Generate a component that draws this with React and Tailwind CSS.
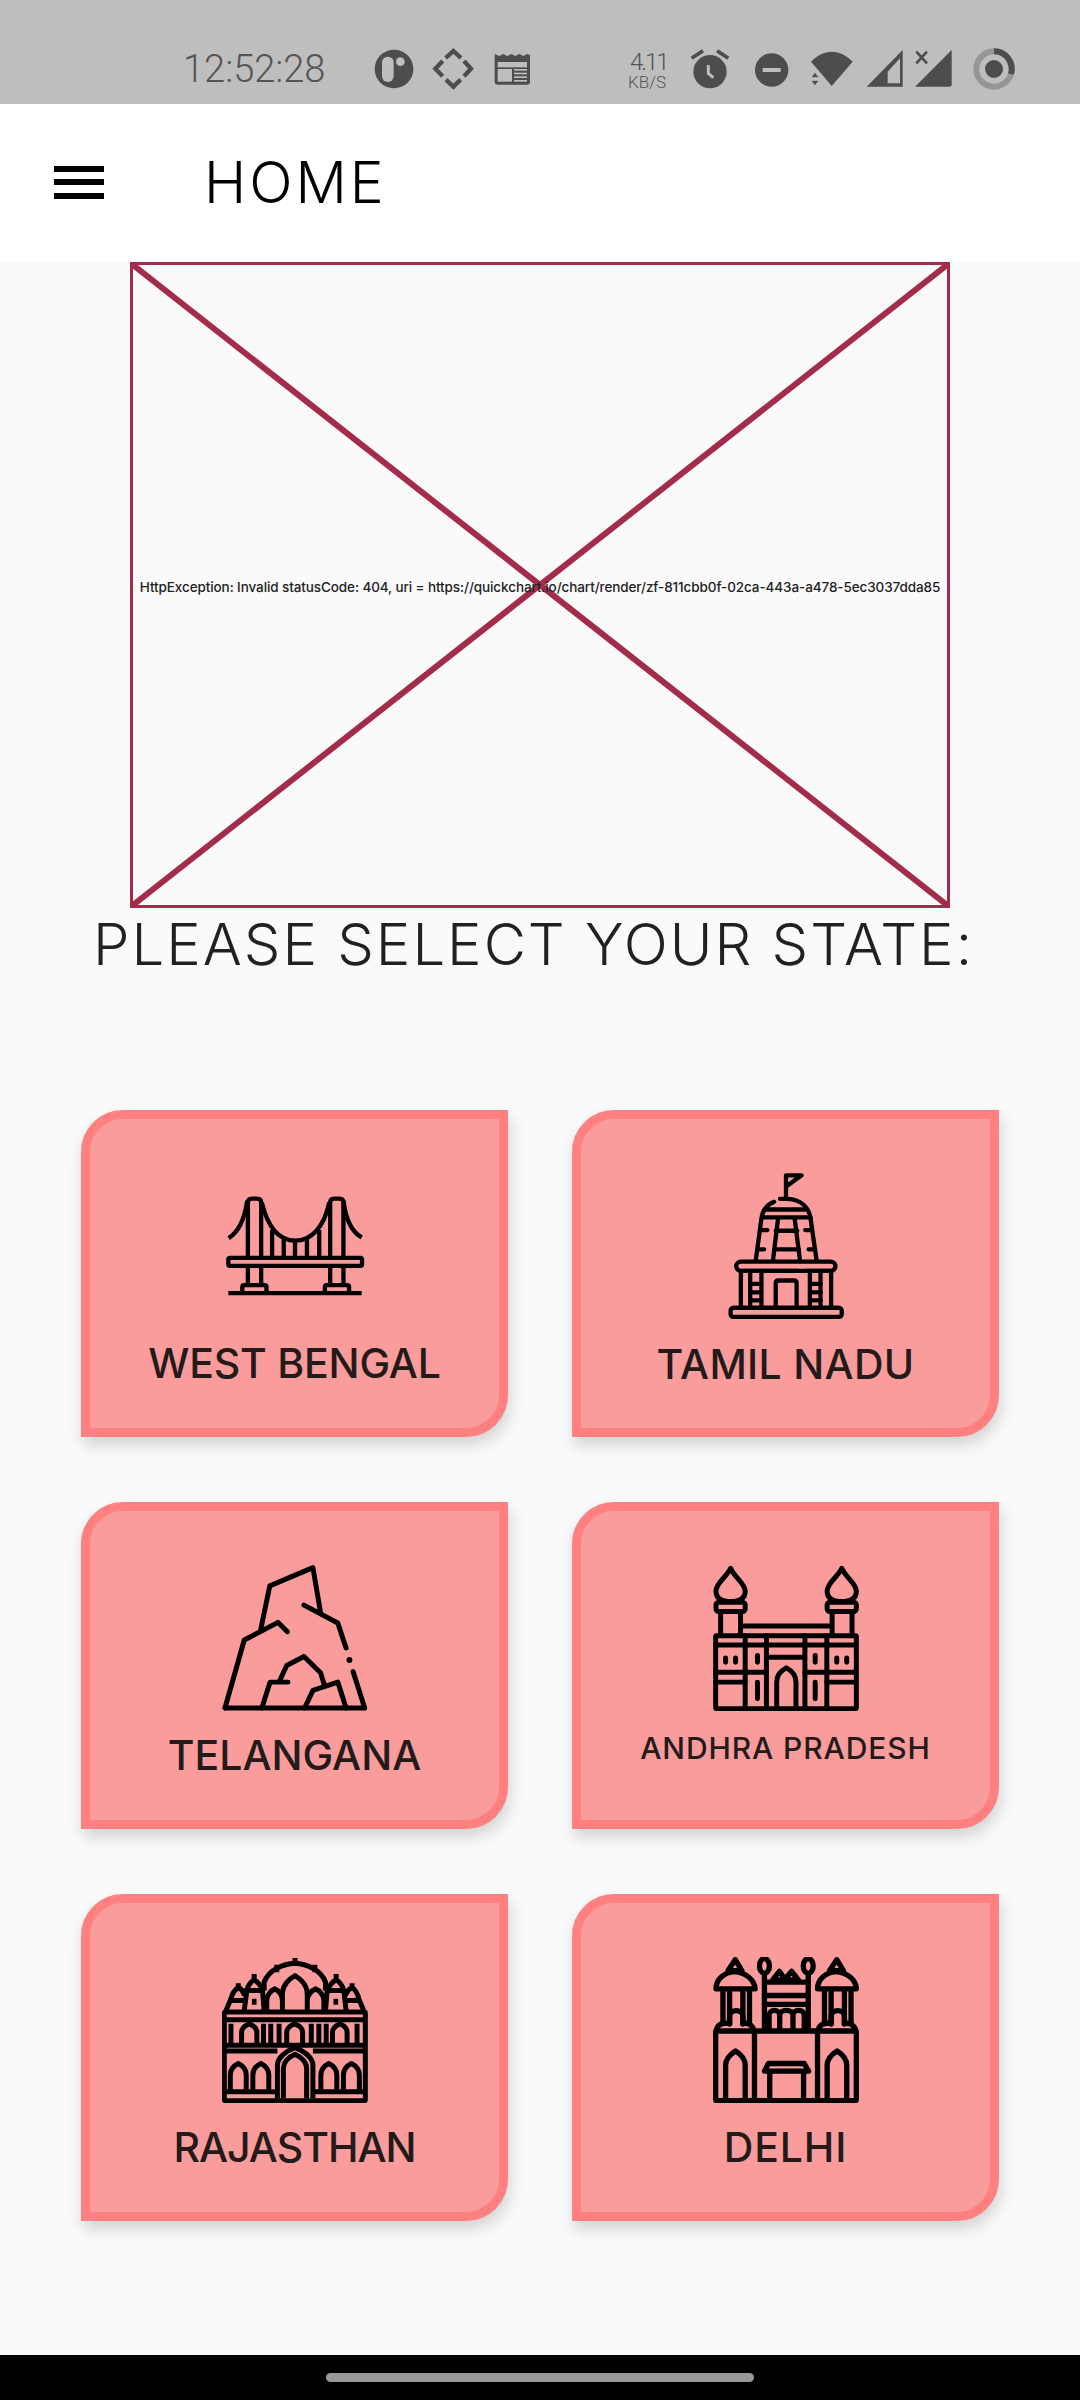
import React from "react";

const FONT = "font-['Inter','Liberation_Sans',sans-serif]";

// Status bar icons, drawn in 3x crop coordinates
const StatusIconsLeft = () => (
  <svg width="180" height="60" viewBox="0 0 540 180" fill="#4d4d4d" className="shrink-0">
    <circle cx="102" cy="87" r="58" />
    <rect x="66" y="50" width="35" height="76" rx="17" fill="#bebebe" />
    <circle cx="121" cy="65" r="13" fill="#bebebe" />
    <g fill="none" stroke="#4d4d4d" strokeWidth="13">
      <path d="M257 54 L280 33 L303 54" />
      <path d="M248 63 L226 86 L248 109" />
      <path d="M312 63 L333 86 L312 109" />
      <path d="M258 119 L280 140 L302 119" />
    </g>
    <path d="M404 42 L418 48 L430 42 L442 48 L454 42 L466 48 L478 42 L490 48 L502 42 L510 46 V125 Q510 134 500 134 H414 Q404 134 404 125 Z" />
    <rect x="413" y="66" width="88" height="16" fill="#bebebe" />
    <rect x="413" y="87" width="43" height="38" fill="#bebebe" />
    <g fill="#bebebe">
      <rect x="462" y="87" width="39" height="5" />
      <rect x="462" y="98" width="39" height="5" />
      <rect x="462" y="109" width="39" height="5" />
      <rect x="462" y="120" width="39" height="5" />
    </g>
  </svg>
);

const StatusIconsRight = () => (
  <svg width="345" height="60" viewBox="0 0 1035 180" fill="#4d4d4d" className="shrink-0">
    {/* alarm */}
    <circle cx="75" cy="95" r="50" />
    <path d="M20 55 L54 32 M130 55 L96 32" stroke="#4d4d4d" strokeWidth="11" fill="none" />
    <path d="M70 75 V100 L85 113" stroke="#bebebe" strokeWidth="9" fill="none" />
    {/* do not disturb */}
    <circle cx="260" cy="90" r="50" />
    <rect x="233" y="84" width="54" height="12" fill="#bebebe" />
    {/* wifi */}
    <path d="M378 65 C415 25 465 25 503 65 L440 138 L418 112 Z" />
    <path d="M390 98 L400 112 H380 Z M380 122 H400 L390 136 Z" />
    <rect x="375" y="113" width="30" height="8" fill="#bebebe" />
    {/* signal 1 */}
    <path fillRule="evenodd" d="M545 140 L653 30 V140 Z M608 130 H645 V55 L608 95 Z" />
    {/* sim x */}
    <path d="M694 35 L726 70 M726 35 L694 70" stroke="#4d4d4d" strokeWidth="8" fill="none" />
    {/* signal 2 */}
    <path d="M690 140 L800 30 V134 Q800 140 794 140 Z" />
    {/* ring */}
    <circle cx="927" cy="87" r="53" fill="none" stroke="#969696" strokeWidth="18" />
    <path d="M927 34 A53 53 0 0 1 978 102" fill="none" stroke="#4d4d4d" strokeWidth="18" />
    <circle cx="927" cy="87" r="27" />
  </svg>
);

const Bridge = () => (
  <svg width="146" height="146" viewBox="482 247 440 438" fill="none" stroke="#000" strokeWidth="13">
    <path d="M560 500 V335 Q560 323 572 323 H588 Q600 323 600 335 V500 M560 530 V582 M600 530 V582" />
    <path d="M808 500 V335 Q808 323 820 323 H836 Q848 323 848 335 V500 M808 530 V582 M848 530 V582" />
    <path d="M502 442 C530 425 550 385 558 330 M903 440 C875 425 855 385 848 330" />
    <path d="M602 335 C620 410 655 450 703 450 C750 450 790 410 805 335" />
    <path d="M633 418 V500 M668 445 V500 M702 455 V500 M738 445 V500 M775 418 V500" />
    <rect x="501" y="502" width="403" height="24" rx="5" />
    <path d="M543 605 V590 Q543 584 549 584 H610 Q616 584 616 590 V605" />
    <path d="M792 605 V590 Q792 584 798 584 H859 Q865 584 865 590 V605" />
    <path d="M501 608 H903" />
  </svg>
);

const Temple = () => (
  <svg width="146" height="146" viewBox="456 249 440 438" fill="none" stroke="#000" strokeWidth="13" strokeLinecap="round" strokeLinejoin="round">
    <path d="M676 325 V255 H723 L682 285" />
    <path d="M658 326 H680 C720 328 745 350 750 385 L768 510 M640 335 C615 345 605 365 602 385 L585 510" />
    <path d="M612 358 H740 M605 382 H750" />
    <path d="M652 385 L637 510 M702 385 L718 510 M645 422 H710 M640 478 H715" />
    <path d="M603 420 H620 M734 420 H748 M592 478 H610 M744 478 H760" />
    <rect x="526" y="515" width="299" height="28" rx="14" />
    <path d="M545 543 H712 M735 543 H810" />
    <path d="M540 545 V650 M568 550 V650 M602 550 V650 M748 550 V650 M780 550 V650 M812 545 V650" />
    <path d="M570 582 H600 M570 608 H600 M570 632 H600 M750 582 H780 M750 608 H780 M750 632 H780" />
    <path d="M645 650 V580 Q645 572 653 572 H700 Q708 572 708 580 V650" />
    <rect x="509" y="654" width="335" height="28" rx="9" />
  </svg>
);

const Cave = () => (
  <svg width="146" height="146" viewBox="123 73 440 438" fill="none" stroke="#000" strokeWidth="15" strokeLinecap="round" strokeLinejoin="round">
    <path d="M132 503 H553" />
    <path d="M132 503 L190 298 L292 245 L320 273" />
    <path d="M240 265 L267 135 L397 80 L420 215" />
    <path d="M370 193 L472 247 L497 322" />
    <path d="M518 393 L553 503" />
    <path d="M243 503 L268 425 H322" />
    <path d="M297 420 L318 375 L370 348 L420 397 L432 435" />
    <path d="M372 503 L397 450 L472 425 L497 503" />
    <circle cx="507" cy="358" r="9" fill="#000" stroke="none" />
  </svg>
);

const Charminar = () => (
  <svg width="146" height="146" viewBox="95 73 440 438" fill="none" stroke="#000" strokeWidth="15" strokeLinecap="round" strokeLinejoin="round">
    <path d="M148 82 C135 110 105 125 104 150 C104 170 118 182 148 182 C178 182 192 170 192 150 C190 125 160 110 148 82 Z" />
    <path d="M483 82 C470 110 440 125 439 150 C439 170 453 182 483 182 C513 182 527 170 527 150 C525 125 495 110 483 82 Z" />
    <rect x="104" y="184" width="88" height="28" rx="8" />
    <rect x="439" y="184" width="88" height="28" rx="8" />
    <path d="M118 212 V285 M178 212 V285 M454 212 V285 M514 212 V285 M178 256 H454" />
    <rect x="103" y="285" width="424" height="220" rx="3" />
    <path d="M103 313 H527 M192 285 V505 M256 285 V505 M372 285 V505 M438 285 V505 M256 350 H372" />
    <path d="M287 505 V425 C287 405 300 390 316 382 C332 390 345 405 345 425 V505" />
    <path d="M103 395 H192 M103 425 H192 M438 395 H527 M438 425 H527 M192 395 H256 M372 395 H438" />
    <path d="M133 352 V365 M163 352 V365 M229 345 V365 M403 345 V365 M468 352 V365 M498 352 V365 M229 425 V475 M403 425 V475" />
  </svg>
);

const HawaMahal = () => (
  <svg width="146" height="146" viewBox="123 50 440 438" fill="none" stroke="#000" strokeWidth="15" strokeLinejoin="round">
    <rect x="130" y="215" width="425" height="267" rx="3" />
    <path d="M130 238 H555 M130 315 H555 M130 332 H290 M397 332 H555 M130 455 H290 M397 455 H555" />
    <path d="M305 210 V160 C305 135 325 115 343 105 C360 115 380 135 380 160 V210" />
    <path d="M250 150 V125 C265 85 310 70 343 68 C375 70 420 85 435 125 V150 M343 52 V68 M288 72 V95 M403 72 V95" />
    <path d="M258 210 V180 C258 165 270 150 282 145 C295 150 305 165 305 180 M380 180 C380 165 392 150 405 145 C418 150 430 165 430 180 V210" />
    <path d="M190 210 L198 150 C200 135 212 122 220 118 C228 122 240 135 245 150 L250 210 M220 100 V118 M190 150 H250" />
    <path d="M435 210 L440 150 C445 135 458 122 467 118 C475 122 487 135 490 150 L497 210 M467 100 V118 M437 150 H495" />
    <path d="M135 210 L150 175 C152 160 165 145 172 140 C180 145 188 155 192 165 M172 128 V140 M150 180 H190" />
    <path d="M550 210 L535 175 C533 160 522 145 515 140 C507 145 498 155 494 165 M515 128 V140 M497 180 H535" />
    <rect x="213" y="175" width="14" height="18" fill="#000" stroke="none" />
    <rect x="459" y="175" width="14" height="18" fill="#000" stroke="none" />
    <path d="M150 250 V315 M248 250 V315 M270 250 V315 M295 250 V315 M392 250 V315 M415 250 V315 M437 250 V315 M530 250 V315" />
    <path d="M318 310 V275 C318 265 330 255 342 250 C354 255 366 265 366 275 V310" />
    <path d="M182 310 V275 C182 265 194 255 205 250 C216 255 228 265 228 275 V310" />
    <path d="M456 310 V275 C456 265 468 255 478 250 C489 255 500 265 500 275 V310" />
    <path d="M290 475 V375 C290 350 320 330 343 322 C365 330 397 350 397 375 V475" />
    <path d="M308 475 V385 C308 365 325 350 343 342 C360 350 378 365 378 385 V475" />
    <path d="M148 450 V405 C148 388 160 376 172 370 C184 376 196 388 196 405 V450" />
    <path d="M216 450 V405 C216 388 228 376 240 370 C252 376 264 388 264 405 V450" />
    <path d="M421 450 V405 C421 388 433 376 445 370 C457 376 469 388 469 405 V450" />
    <path d="M489 450 V405 C489 388 501 376 513 370 C525 376 537 388 537 405 V450" />
  </svg>
);

const RedFort = () => (
  <svg width="146" height="146" viewBox="95 50 440 438" fill="none" stroke="#000" strokeWidth="16" strokeLinejoin="round" strokeLinecap="round">
    <rect x="103" y="272" width="424" height="210" rx="4" />
    <path d="M220 272 V482 M410 272 V482" />
    <path d="M104 145 C104 115 130 95 160 93 C190 95 220 115 222 145 Z" />
    <path d="M140 90 L162 57 L182 90 Z" />
    <path d="M410 145 C410 115 436 95 466 93 C496 95 526 115 527 145 Z" />
    <path d="M446 90 L468 57 L488 90 Z" />
    <path d="M125 150 V250 M145 150 V250 M185 150 V250 M205 150 V250 M431 150 V250 M451 150 V250 M491 150 V250 M511 150 V250" />
    <path d="M145 250 V228 C145 205 185 205 185 228 V250 M451 250 V228 C451 205 491 205 491 228 V250" />
    <path d="M105 268 C110 250 130 245 145 250 M185 250 C200 245 215 255 218 270 M412 268 C417 250 437 245 451 250 M491 250 C506 245 521 255 525 270" />
    <path d="M250 100 V270 M382 100 V270" />
    <ellipse cx="250" cy="76" rx="15" ry="22" />
    <ellipse cx="382" cy="76" rx="15" ry="22" />
    <path d="M275 118 L295 92 L312 116 L332 92 L352 118 Z" />
    <path d="M250 125 H382 M250 165 H382 M250 192 H382" />
    <path d="M264 268 V225 C264 205 296 205 296 225 V268 M296 225 C296 205 336 205 336 225 V268 M336 225 C336 205 370 205 370 225 V268" />
    <path d="M133 475 V375 C133 355 150 340 163 332 C176 340 192 355 192 375 V475" />
    <path d="M439 475 V375 C439 355 456 340 469 332 C482 340 498 355 498 375 V475" />
    <path d="M266 475 V398 M368 475 V398 M250 393 L262 370 H370 L383 393 Z" />
  </svg>
);

const states = [
  { label: "WEST BENGAL", Icon: Bridge, labelClass: "mt-[19px] text-[41px] tracking-[-0.2px]" },
  { label: "TAMIL NADU", Icon: Temple, labelClass: "mt-[20px] text-[41px] tracking-[0.3px]" },
  { label: "TELANGANA", Icon: Cave, labelClass: "mt-[19px] text-[41px] tracking-[0px]" },
  { label: "ANDHRA PRADESH", Icon: Charminar, labelClass: "mt-[12px] text-[30px] tracking-[0.9px]" },
  { label: "RAJASTHAN", Icon: HawaMahal, labelClass: "mt-[19px] text-[41px] tracking-[-1px]" },
  { label: "DELHI", Icon: RedFort, labelClass: "mt-[19px] text-[41px] tracking-[0.9px]" },
];

const StateCard = ({ label, Icon, labelClass }) => (
  <div className="h-[327px] w-[427px] flex flex-col items-center pt-[54px] border-[9px] border-[#ff8080] bg-[#fa9c9c] rounded-tl-[42px] rounded-br-[42px] shadow-[2px_8px_16px_rgba(0,0,0,0.16)]">
    <Icon />
    <div className={`h-[50px] leading-[50px] font-medium text-[#231a1a] whitespace-nowrap ${labelClass}`}>
      {label}
    </div>
  </div>
);

export default function App() {
  return (
    <div className={`w-[1080px] h-[2400px] flex flex-col bg-[#fafafa] overflow-hidden ${FONT}`}>
      {/* Status bar */}
      <div className="h-[104px] shrink-0 bg-[#bebebe] pt-[40px] pl-[183px] flex items-start text-[#555555]">
        <div className="w-[177px] h-[60px] leading-[58px] text-[38px] font-light font-['Roboto',sans-serif]">
          12:52:28
        </div>
        <StatusIconsLeft />
        <div className="ml-[88px] w-[57px] flex flex-col font-['Roboto',sans-serif] font-light">
          <span className="text-[24px] leading-[24px] mt-[10px] tracking-[-2px] pl-[2px]">4.11</span>
          <span className="text-[17px] leading-[14px] mt-[1px]">KB/S</span>
        </div>
        <StatusIconsRight />
      </div>

      {/* App bar */}
      <div className="h-[158px] shrink-0 bg-white flex items-center pl-[54px]">
        <div className="w-[50px] flex flex-col gap-[7.5px] mb-[2px]">
          <div className="h-[6px] bg-black" />
          <div className="h-[6px] bg-black" />
          <div className="h-[6px] bg-black" />
        </div>
        <div className="ml-[100px] mb-[2px] text-[57px] leading-none font-light tracking-[3px] text-black">HOME</div>
      </div>

      {/* Failed chart image */}
      <div className="relative ml-[130px] w-[820px] h-[646px] shrink-0 border-[3px] border-[#a32c4c]">
        <svg className="absolute inset-0 w-full h-full" viewBox="0 0 814 640" preserveAspectRatio="none" fill="none" stroke="#a32c4c" strokeWidth="6">
          <path d="M0 0 L814 640 M814 0 L0 640" />
        </svg>
        <div className="relative h-full pt-[4px] flex items-center justify-center text-[13.5px] font-medium text-[#222222] whitespace-nowrap tracking-[-0.1px]">
          HttpException: Invalid statusCode: 404, uri = https://quickchart.io/chart/render/zf-811cbb0f-02ca-443a-a478-5ec3037dda85
        </div>
      </div>

      {/* Heading */}
      <div className="h-[202px] shrink-0 pl-[93px] pt-[4px] text-[58px] leading-[64px] font-light tracking-[2px] text-[#212121] whitespace-nowrap">
        PLEASE SELECT YOUR STATE:
      </div>

      {/* State grid */}
      <div className="grid grid-cols-[427px_427px] gap-x-[64px] gap-y-[65px] pl-[81px]">
        {states.map((state) => (
          <StateCard key={state.label} {...state} />
        ))}
      </div>

      {/* Navigation bar */}
      <div className="mt-auto h-[45px] shrink-0 bg-black flex items-start justify-center pt-[18px]">
        <div className="w-[428px] h-[9px] rounded-full bg-[#999999]" />
      </div>
    </div>
  );
}
